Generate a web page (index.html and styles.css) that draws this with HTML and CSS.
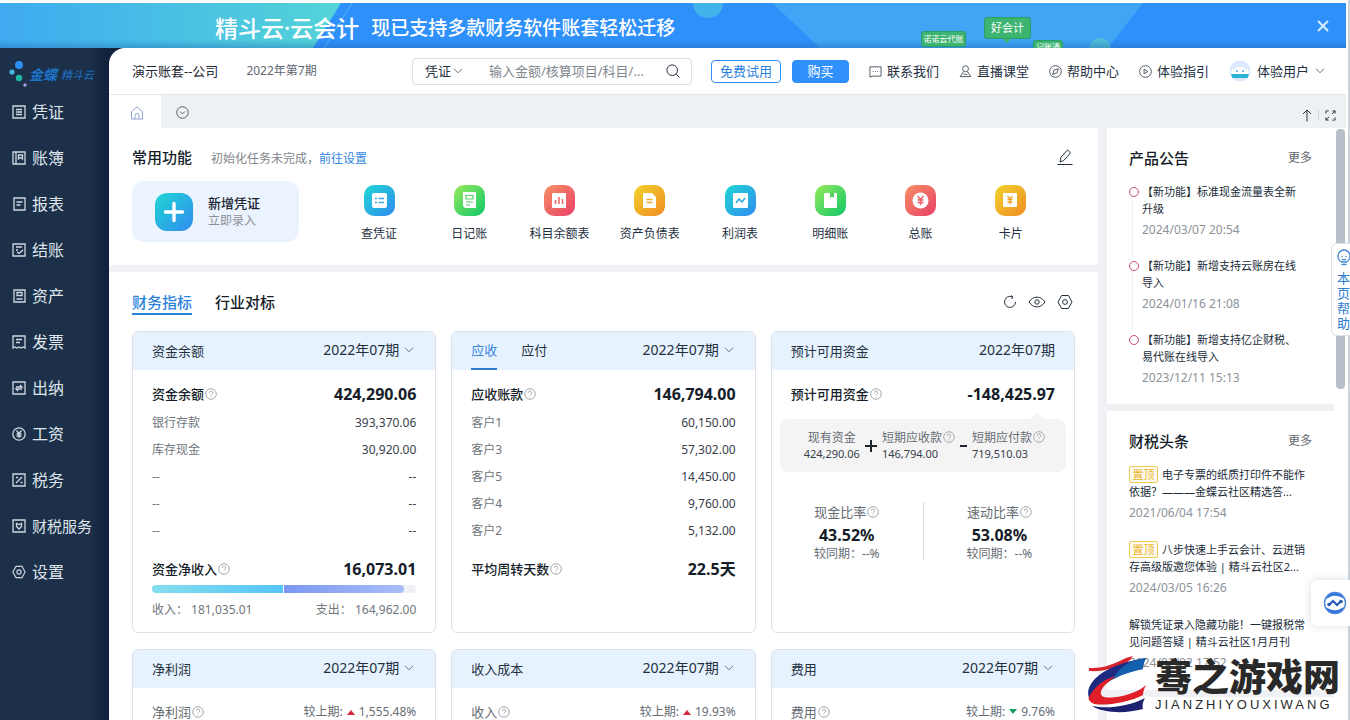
FILE: index.html
```html
<!DOCTYPE html>
<html lang="zh-CN">
<head>
<meta charset="utf-8">
<title>精斗云·云会计</title>
<link rel="stylesheet" href="styles.css">
</head>
<body>
<svg class="defs" aria-hidden="true">
  <defs>
    <linearGradient id="g-teal" x1="0" y1="0" x2="1" y2="1"><stop offset="0" stop-color="#1fd6d4"/><stop offset="1" stop-color="#318cf0"/></linearGradient>
    <linearGradient id="g-green" x1="0" y1="0" x2="1" y2="1"><stop offset="0" stop-color="#96ea5c"/><stop offset="1" stop-color="#0fc768"/></linearGradient>
    <linearGradient id="g-red" x1="0" y1="0" x2="1" y2="1"><stop offset="0" stop-color="#f88f62"/><stop offset="1" stop-color="#e8416a"/></linearGradient>
    <linearGradient id="g-gold" x1="0" y1="0" x2="1" y2="1"><stop offset="0" stop-color="#f2d22c"/><stop offset="1" stop-color="#f08c24"/></linearGradient>
    <linearGradient id="g-banner" x1="0" y1="0" x2="1" y2="0"><stop offset="0" stop-color="#3faaf0"/><stop offset="1" stop-color="#53d4d8"/></linearGradient>
    <linearGradient id="g-shade" x1="0" y1="0" x2="0" y2="1"><stop offset="0" stop-color="#1c5fa8" stop-opacity="0"/><stop offset="1" stop-color="#1c5fa8" stop-opacity=".35"/></linearGradient>
    <symbol id="help" viewBox="0 0 12 12"><circle cx="6" cy="6" r="5.3"/><path d="M4.3 4.8a1.7 1.7 0 1 1 2.5 1.4c-.6.3-.8.6-.8 1.1M6 8.6v.8"/></symbol>
    <symbol id="down" viewBox="0 0 10 6"><path d="M1 .8l4 4 4-4"/></symbol>
    <symbol id="gear" viewBox="0 0 16 16"><path d="M4.6 1.5h6.8L15 8l-3.6 6.5H4.6L1 8z"/><circle cx="8" cy="8" r="2.4"/></symbol>
  </defs>
</svg>

<div class="banner">
  <svg class="banner-art" viewBox="0 0 1346 45" preserveAspectRatio="xMidYMid slice" aria-hidden="true">
    <rect width="1346" height="45" fill="#2e90fa"/>
    <path d="M0 0h341l-28 45H0z" fill="url(#g-banner)"/>
    <path d="M352 0l-28 45" stroke="#58b4fa"/>
    <circle cx="708" cy="0" r="15" fill="#43b3ec"/>
    <path d="M772 0h371l-35 45H820z" fill="#3fa5f4"/>
    <circle cx="1100" cy="46" r="11" fill="#4fbcd8"/>
    <rect y="37" width="1346" height="8" fill="url(#g-shade)"/>
  </svg>
  <div class="banner-text"><strong>精斗云·云会计</strong><span>现已支持多款财务软件账套轻松迁移</span></div>
  <span class="bubble bubble-a">诺诺云代账</span>
  <span class="bubble bubble-b">好会计</span>
  <span class="bubble bubble-c">记账通</span>
  <button class="banner-close" aria-label="关闭"><svg width="12" height="12" viewBox="0 0 12 12" class="line"><path d="M1 1l10 10M11 1L1 11"/></svg></button>
</div>

<div class="shell">
  <nav class="side">
    <div class="logo">
      <svg width="18" height="28" viewBox="0 0 18 28" aria-hidden="true"><circle cx="10" cy="4" r="4" fill="#2d8cf0"/><circle cx="3" cy="11" r="2.6" fill="#41b8d8"/><circle cx="10" cy="17" r="3.2" fill="#1fb8a4"/><circle cx="16" cy="24" r="1.7" fill="#a69be0"/></svg>
      <b>金蝶</b><span>精斗云</span>
    </div>
    <a href="#"><svg viewBox="0 0 14 14"><path d="M1 1h12v12H1zM4 4.5h6M4 7h6M4 9.5h6"/></svg>凭证</a>
    <a href="#"><svg viewBox="0 0 14 14"><path d="M1 1h12v12H1zM4 1v12M6.5 4h4v4l-2-1.5-2 1.5z"/></svg>账簿</a>
    <a href="#"><svg viewBox="0 0 14 14"><path d="M2 1h11v12H2zM4.5 5h6M4.5 8h4"/></svg>报表</a>
    <a href="#"><svg viewBox="0 0 14 14"><path d="M1 1h12v12H1zM4 4h6M4 7h2M5 9l2 1.5L11 7"/></svg>结账</a>
    <a href="#"><svg viewBox="0 0 14 14"><path d="M2 1h11v12H2zM5 3.500h5v3H5zM4.500 10h6"/></svg>资产</a>
    <a href="#"><svg viewBox="0 0 14 14"><path d="M1 1h12v12l-2-1-2 1-2-1-2 1-2-1-2 1zM4 4.500h6M4 7.500h4"/></svg>发票</a>
    <a href="#"><svg viewBox="0 0 14 14"><path d="M1 1h12v12H1zM4 6h6L8 4M10 8H4l2 2"/></svg>出纳</a>
    <a href="#"><svg viewBox="0 0 14 14"><circle cx="7" cy="7" r="6.2"/><path d="M4.500 3.500L7 6.500l2.500-3M7 6.500V11M4.500 7h5M4.500 9h5"/></svg>工资</a>
    <a href="#"><svg viewBox="0 0 14 14"><path d="M1 1h12v12H1zM4 10l6-6M4 4.500h2M8.500 9.500h2"/></svg>税务</a>
    <a href="#" class="long"><svg viewBox="0 0 14 14"><path d="M1 1h12v12H1zM7 10L4.500 7.500V4.500L7 5.500l2.500-1v3z"/></svg>财税服务</a>
    <a href="#"><svg viewBox="0 0 16 16"><use href="#gear"/></svg>设置</a>
  </nav>

  <div class="main">
    <header class="top">
      <span class="company">演示账套--公司</span>
      <span class="period">2022年第7期</span>
      <form class="search">
        <select aria-label="类型"><option>凭证</option></select>
        <svg class="chev" width="10" height="6"><use href="#down"/></svg>
        <input type="text" aria-label="搜索" placeholder="输入金额/核算项目/科目/...">
        <button type="button" aria-label="搜索"><svg width="14" height="14" viewBox="0 0 14 14" class="line"><circle cx="6.200" cy="6.200" r="5.300"/><path d="M10 10l3.500 3.500"/></svg></button>
      </form>
      <button class="btn ghost">免费试用</button>
      <button class="btn solid">购买</button>
      <div class="links">
        <a href="#"><svg width="13" height="13" viewBox="0 0 14 14"><path d="M1 2h12v10H4l-3 1zM4 7h1M6.500 7h1M9 7h1"/></svg>联系我们</a>
        <a href="#"><svg width="13" height="13" viewBox="0 0 14 14"><circle cx="7" cy="4" r="3.200"/><path d="M5 7l-3.800 5.500h11.600L9 7M5 10h4"/></svg>直播课堂</a>
        <a href="#"><svg width="13" height="13" viewBox="0 0 14 14"><circle cx="7" cy="7" r="6.300"/><path d="M10 4L8.500 8.500 4 10l1.500-4.500z"/></svg>帮助中心</a>
        <a href="#"><svg width="13" height="13" viewBox="0 0 14 14"><circle cx="7" cy="7" r="6.300"/><path d="M5.500 4.500L9.500 7l-4 2.500z"/></svg>体验指引</a>
      </div>
      <a href="#" class="user">
        <svg width="22" height="22" viewBox="0 0 22 22"><circle cx="11" cy="11" r="10.500" fill="#dfe9fd"/><path d="M2 14c0-4 2-5 4-5 2-3 8-3 10 0 2 0 4 1 4 5z" fill="#fff"/><path d="M2 14h18l-1.500 4h-15z" fill="#2bb4d6"/><circle cx="8" cy="11" r="1" fill="#58a6f0"/><circle cx="14" cy="11" r="1" fill="#58a6f0"/></svg>体验用户<svg class="chev" width="10" height="6"><use href="#down"/></svg>
      </a>
    </header>

    <div class="tabs">
      <button class="tab home" aria-label="首页"><svg width="14" height="14" viewBox="0 0 14 14"><path d="M1.500 5.500L7 1l5.500 4.500V13h-11zM5 13V9.500a2 2 0 0 1 4 0V13"/></svg></button>
      <button class="tab" aria-label="更多标签"><svg width="13" height="13" viewBox="0 0 14 14"><circle cx="7" cy="7" r="6.200"/><path d="M4.500 6L7 8.500 9.500 6"/></svg></button>
      <div class="tab-tools">
        <button aria-label="收起"><svg width="10" height="13" viewBox="0 0 10 13" class="line"><path d="M5 12.500V1M1 5l4-4 4 4"/></svg></button>
        <button aria-label="全屏"><svg width="11" height="11" viewBox="0 0 12 12" class="line"><path d="M1 4V1h3M8 1h3v3M11 8v3H8M4 11H1V8M11 1L7.500 4.500M1 11l3.500-3.500"/></svg></button>
      </div>
    </div>

    <div class="content">
      <main class="left">
        <section class="common">
          <div class="head">
            <h2>常用功能</h2>
            <p>初始化任务未完成，<a href="#">前往设置</a></p>
            <button aria-label="编辑"><svg width="18" height="18" viewBox="0 0 18 18" class="line"><path d="M4 14l.8-4.500L11.500 2l3 2.800-6.700 7.700zM1.500 16.500h15"/></svg></button>
          </div>
          <div class="shortcuts">
            <a href="#" class="create">
              <svg width="38" height="38" viewBox="0 0 38 38"><rect width="38" height="38" rx="12" fill="url(#g-teal)"/><path d="M19 10.500v17M10.500 19h17" stroke="#fff" stroke-width="3.400" stroke-linecap="round"/></svg>
              <span><b>新增凭证</b><small>立即录入</small></span>
            </a>
            <div class="apps">
              <a href="#"><svg viewBox="0 0 31 31"><rect width="31" height="31" rx="10" fill="url(#g-teal)"/><rect x="8" y="8" width="15" height="15" rx="2" fill="#fff"/><path d="M11 13.500h2M14.500 13.500H20M11 17.500h2M14.500 17.500H20" stroke="#3ba8e8" stroke-width="1.400"/></svg>查凭证</a>
              <a href="#"><svg viewBox="0 0 31 31"><rect width="31" height="31" rx="10" fill="url(#g-green)"/><path d="M9 7h13v16H11l-2-2z" fill="#fff"/><path d="M12 10.500h7v3.500h-7zM12 17h7M12 20h4" stroke="#53cf66" stroke-width="1.200" fill="none"/></svg>日记账</a>
              <a href="#"><svg viewBox="0 0 31 31"><rect width="31" height="31" rx="10" fill="url(#g-red)"/><rect x="8" y="8" width="14" height="15" rx="1" fill="#fff"/><path d="M11.500 19v-4M15 19v-7M18.500 19v-5" stroke="#ef6264" stroke-width="1.500"/></svg>科目余额表</a>
              <a href="#"><svg viewBox="0 0 31 31"><rect width="31" height="31" rx="10" fill="url(#g-gold)"/><path d="M9 8h9l4 4v11H9z" fill="#fff"/><path d="M12.500 14.500h6M12.500 17.500h6" stroke="#f0ac2c" stroke-width="1.400"/></svg>资产负债表</a>
              <a href="#"><svg viewBox="0 0 31 31"><rect width="31" height="31" rx="10" fill="url(#g-teal)"/><rect x="8" y="8" width="15" height="15" rx="1" fill="#fff"/><path d="M11 18l3-4 3 3 3-4" stroke="#2eaadf" stroke-width="1.500" fill="none"/></svg>利润表</a>
              <a href="#"><svg viewBox="0 0 31 31"><rect width="31" height="31" rx="10" fill="url(#g-green)"/><rect x="9" y="8" width="13" height="15" rx="1" fill="#fff"/><path d="M15 8v5l2-1.500 2 1.500V8z" fill="#55cc60"/></svg>明细账</a>
              <a href="#"><svg viewBox="0 0 31 31"><rect width="31" height="31" rx="10" fill="url(#g-red)"/><circle cx="15.500" cy="15.500" r="8" fill="#fff"/><path d="M12.500 11l3 3.500 3-3.500M15.500 14.500V20M12.500 15h6M12.500 17.500h6" stroke="#ee5c66" stroke-width="1.400" fill="none"/></svg>总账</a>
              <a href="#"><svg viewBox="0 0 31 31"><rect width="31" height="31" rx="10" fill="url(#g-gold)"/><rect x="8" y="8" width="14" height="14" rx="1" fill="#fff"/><path d="M12.500 11l2.500 3 2.500-3M15 14v5.500M12.500 14.500h5M12.500 17h5" stroke="#f0a62a" stroke-width="1.300" fill="none"/></svg>卡片</a>
            </div>
          </div>
        </section>

        <section class="metrics">
          <div class="metric-tabs">
            <button class="on">财务指标</button><button>行业对标</button>
            <div class="tools">
              <button aria-label="刷新"><svg width="14" height="14" viewBox="0 0 14 14" class="line"><path d="M9 1.800A5.500 5.500 0 1 0 12.500 7M8 .5l2 1.500-1.500 2"/></svg></button>
              <button aria-label="显示"><svg width="18" height="12" viewBox="0 0 18 12" class="line"><path d="M1 6c4-6.500 12-6.500 16 0-4 6.500-12 6.500-16 0z"/><circle cx="9" cy="6" r="2.200"/></svg></button>
              <button aria-label="设置"><svg width="16" height="16" class="line"><use href="#gear"/></svg></button>
            </div>
          </div>

          <div class="cards">
            <article class="card">
              <header><h3>资金余额</h3><button class="month">2022年07期<svg class="chev" width="10" height="6"><use href="#down"/></svg></button></header>
              <div class="body">
                <div class="sum"><h4>资金余额<svg class="q"><use href="#help"/></svg></h4><b>424,290.06</b></div>
                <table>
                  <tr><th>银行存款</th><td>393,370.06</td></tr>
                  <tr><th>库存现金</th><td>30,920.00</td></tr>
                  <tr><th>--</th><td>--</td></tr>
                  <tr><th>--</th><td>--</td></tr>
                  <tr><th>--</th><td>--</td></tr>
                </table>
                <div class="sum"><h4>资金净收入<svg class="q"><use href="#help"/></svg></h4><b>16,073.01</b></div>
                <div class="bar"><i class="in" style="width:50%"></i><i class="out" style="width:45.5%"></i></div>
                <div class="legend"><span>收入： 181,035.01</span><span>支出： 164,962.00</span></div>
              </div>
            </article>

            <article class="card">
              <header><div class="switch"><button class="on">应收</button><button>应付</button></div><button class="month">2022年07期<svg class="chev" width="10" height="6"><use href="#down"/></svg></button></header>
              <div class="body">
                <div class="sum"><h4>应收账款<svg class="q"><use href="#help"/></svg></h4><b>146,794.00</b></div>
                <table>
                  <tr><th>客户1</th><td>60,150.00</td></tr>
                  <tr><th>客户3</th><td>57,302.00</td></tr>
                  <tr><th>客户5</th><td>14,450.00</td></tr>
                  <tr><th>客户4</th><td>9,760.00</td></tr>
                  <tr><th>客户2</th><td>5,132.00</td></tr>
                </table>
                <div class="sum"><h4>平均周转天数<svg class="q"><use href="#help"/></svg></h4><b>22.5天</b></div>
              </div>
            </article>

            <article class="card">
              <header><h3>预计可用资金</h3><span class="month">2022年07期</span></header>
              <div class="body">
                <div class="sum"><h4>预计可用资金<svg class="q"><use href="#help"/></svg></h4><b>-148,425.97</b></div>
                <div class="formula">
                  <div class="term first"><span>现有资金</span><em>424,290.06</em></div>
                  <svg width="12" height="12" viewBox="0 0 12 12"><path d="M6 0v12M0 6h12"/></svg>
                  <div class="term"><span>短期应收款<svg class="q"><use href="#help"/></svg></span><em>146,794.00</em></div>
                  <svg width="7" height="12" viewBox="0 0 7 12"><path d="M0 6h7"/></svg>
                  <div class="term"><span>短期应付款<svg class="q"><use href="#help"/></svg></span><em>719,510.03</em></div>
                </div>
                <div class="ratios">
                  <div><span>现金比率<svg class="q"><use href="#help"/></svg></span><b>43.52%</b><small>较同期：--%</small></div>
                  <div><span>速动比率<svg class="q"><use href="#help"/></svg></span><b>53.08%</b><small>较同期：--%</small></div>
                </div>
              </div>
            </article>

            <article class="card">
              <header><h3>净利润</h3><button class="month">2022年07期<svg class="chev" width="10" height="6"><use href="#down"/></svg></button></header>
              <div class="body"><div class="trend"><span>净利润<svg class="q"><use href="#help"/></svg></span><span>较上期:<svg width="8" height="6"><path d="M0 6l4-5 4 5z" fill="#d8293f"/></svg>1,555.48%</span></div></div>
            </article>
            <article class="card">
              <header><h3>收入成本</h3><button class="month">2022年07期<svg class="chev" width="10" height="6"><use href="#down"/></svg></button></header>
              <div class="body"><div class="trend"><span>收入<svg class="q"><use href="#help"/></svg></span><span>较上期:<svg width="8" height="6"><path d="M0 6l4-5 4 5z" fill="#d8293f"/></svg>19.93%</span></div></div>
            </article>
            <article class="card">
              <header><h3>费用</h3><button class="month">2022年07期<svg class="chev" width="10" height="6"><use href="#down"/></svg></button></header>
              <div class="body"><div class="trend"><span>费用<svg class="q"><use href="#help"/></svg></span><span>较上期:<svg width="8" height="6"><path d="M0 0h8L4 5z" fill="#1f9d62"/></svg>9.76%</span></div></div>
            </article>
          </div>
        </section>
      </main>

      <aside class="right">
        <section class="panel notices">
          <div class="panel-head"><h2>产品公告</h2><a href="#">更多</a></div>
          <ul>
            <li><a href="#">【新功能】标准现金流量表全新升级</a><time>2024/03/07 20:54</time></li>
            <li><a href="#">【新功能】新增支持云账房在线导入</a><time>2024/01/16 21:08</time></li>
            <li><a href="#">【新功能】新增支持亿企财税、易代账在线导入</a><time>2023/12/11 15:13</time></li>
          </ul>
        </section>
        <section class="panel news">
          <div class="panel-head"><h2>财税头条</h2><a href="#">更多</a></div>
          <ul>
            <li><a href="#"><span class="pin">置顶</span>电子专票的纸质打印件不能作<br>依据？———金蝶云社区精选答...</a><time>2021/06/04 17:54</time></li>
            <li><a href="#"><span class="pin">置顶</span>八步快速上手云会计、云进销<br>存高级版邀您体验 | 精斗云社区2...</a><time>2024/03/05 16:26</time></li>
            <li><a href="#">解锁凭证录入隐藏功能！一键报税常<br>见问题答疑 | 精斗云社区1月月刊</a><time>2024/02/02 17:52</time></li>
          </ul>
        </section>
        <section class="panel rest"></section>
      </aside>
      <div class="track"><div class="thumb"></div></div>
    </div>
  </div>
</div>

<button class="float-help">
  <svg width="14" height="18" viewBox="0 0 14 18" aria-hidden="true"><path d="M4.500 13C2 11.500 1 9.500 1 7a6 6 0 0 1 12 0c0 2.500-1 4.500-3.500 6zM4.500 15.500h5M5 7v1M9 7v1M5 10c1 1 3 1 4 0"/></svg>
  <span>本页帮助</span>
</button>
<button class="float-chat" aria-label="客服"><svg width="24" height="24" viewBox="0 0 24 24"><circle cx="12" cy="12" r="10.500" fill="#fff" stroke="#4a86dc" stroke-width="1.400"/><path d="M3 8c3-8 15-8 18 0-5-4-11-4-14-2zM21 16c-3 8-15 8-18 0 5 4 11 4 14 2z" fill="#3474d6"/><path d="M6 14l4-4 4 4 4-4" fill="none" stroke="#2557b8" stroke-width="2"/><circle cx="6" cy="13.500" r="1.800" fill="#2557b8"/><circle cx="18" cy="10.500" r="1.800" fill="#2557b8"/></svg></button>

<div class="watermark">
  <svg width="60" height="58" viewBox="0 0 60 58" aria-hidden="true">
    <path d="M2 13C16 14 29 8 39 3L46 1l-4 5C30 13 16 17 2 16z" fill="#d8232c"/>
    <path d="M59 3c-2 4-3 7-3 11C38 17 17 25 3 45-5 31 13 10 59 3z" fill="#1c2a80"/>
    <path d="M59 3c-2 4-3 7-3 11-10 2-20 5-30 10C32 12 43 5 59 3z" fill="#1260ae"/>
    <path d="M2 42C8 30 20 23 29 21 17 29 11 37 15 41c6 4 32 0 44-11-2 4-3 7-3 10C42 48 12 52 5 48c-3-2-4-4-3-6z" fill="#e01f28"/>
    <path d="M5 51c14 3 36 1 53-8-2 4-3 7-2 11C38 59 16 58 5 51z" fill="#1c2270"/>
  </svg>
  <div><strong>骞之游戏网</strong><span>JIANZHIYOUXIWANG</span></div>
</div>
</body>
</html>
```

FILE: styles.css
```css
* { box-sizing: border-box; }
html, body { height: 100%; }
body {
  margin: 0;
  padding: 3px 4px 0 0;
  display: flex;
  flex-direction: column;
  overflow: hidden;
  background: linear-gradient(to left, #ccd3da 2px, #fff 2px);
  font: 13px/18px "Noto Sans", "Noto Sans CJK SC", sans-serif;
  color: #24303f;
}
h2, h3, h4, p, ul { margin: 0; padding: 0; font-weight: 400; }
ul { list-style: none; }
a { color: inherit; text-decoration: none; }
button, input, select { font: inherit; color: inherit; background: none; border: 0; padding: 0; margin: 0; }
button { cursor: pointer; }
svg { display: block; flex: none; }
.defs { position: absolute; width: 0; height: 0; }
.line { fill: none; stroke: currentColor; }
.chev { fill: none; stroke: #6b7480; }
.q { display: inline-block; width: 12px; height: 12px; margin-left: 1px; fill: none; stroke: #a5a9af; vertical-align: -1px; }

/* Promotion banner */
.banner { position: relative; flex: none; height: 45px; overflow: hidden; color: #fff; }
.banner-art { position: absolute; inset: 0; width: 100%; height: 100%; }
.banner-text { position: relative; display: flex; align-items: center; gap: 12px; height: 100%; padding: 4px 0 0 215px; line-height: 32px; }
.banner-text strong { font-size: 23px; font-weight: 500; }
.banner-text span { font-size: 19px; font-weight: 500; }
.bubble { position: absolute; background: #3db471; border: 1px solid #279f66; border-radius: 3px; text-align: center; white-space: nowrap; }
.bubble-a { right: 380px; top: 28px; width: 45px; font-size: 8px; line-height: 14px; }
.bubble-b { right: 315px; top: 14px; width: 47px; font-size: 11px; line-height: 20px; }
.bubble-b::after { content: ""; position: absolute; left: 18px; top: 21px; border: 4px solid transparent; border-top-color: #3db471; border-bottom: 0; }
.bubble-c { right: 283px; top: 37px; width: 30px; font-size: 8px; line-height: 12px; }
.banner-close { position: absolute; right: 17px; top: 17px; color: #d8ecff; }
.banner-close svg { stroke-width: 2; }

/* Shell */
.shell { flex: 1; min-height: 0; display: flex; background: #14233d; }
.side { flex: none; width: 109px; background: linear-gradient(to right, #1c3049 88px, #10203c); color: #dfe5ec; }
.logo { display: flex; align-items: center; height: 41px; padding: 12px 0 0 9px; color: #1d74c8; font-size: 11px; font-style: italic; white-space: nowrap; }
.logo b { font-size: 14px; margin: 0 4px 0 2px; }
.side a { display: flex; align-items: center; gap: 6px; height: 46px; padding-left: 12px; font-size: 16px; line-height: 24px; }
.side a.long { font-size: 15px; }
.side a svg { width: 14px; height: 14px; fill: none; stroke: #cfd8e2; stroke-width: 1.300; }
.main { flex: 1; min-width: 0; display: flex; flex-direction: column; background: #fff; border-top-left-radius: 16px; overflow: hidden; }

/* Header */
.top { flex: none; display: flex; align-items: center; height: 47px; padding: 0 21px 0 23px; border-bottom: 1px solid #e4e7ea; white-space: nowrap; }
.company { color: #1d2733; }
.period { margin-left: 28px; font-size: 12px; color: #606770; }
.search { display: flex; align-items: center; flex: 1; max-width: 280px; height: 27px; margin: 0 19px 0 auto; padding: 0 11px 0 12px; border: 1px solid #dcdfe3; border-radius: 4px; }
.search select { appearance: none; width: 28px; }
.search input { flex: 1; min-width: 0; margin: 0 8px 0 26px; outline: 0; }
.search input::placeholder { color: #80868e; opacity: 1; }
.btn { height: 23px; border-radius: 4px; border: 1px solid #2f8df5; }
.ghost { width: 70px; color: #2b82dd; }
.solid { width: 57px; margin-left: 11px; background: #2f8ffb; color: #fff; }
.links { display: flex; gap: 20px; margin-left: 20px; }
.links a { display: flex; align-items: center; gap: 5px; }
.links svg { fill: none; stroke: #4a535e; }
.user { display: flex; align-items: center; gap: 6px; margin-left: 20px; }

/* Tab strip */
.tabs { flex: none; display: flex; height: 33px; background: #eef1f3; }
.tab { width: 42px; padding: 2px 0 0; display: flex; align-items: center; justify-content: center; }
.tab svg { fill: none; stroke: #4b535d; }
.home { width: 52px; background: #fff; padding: 2px 0 0 3px; }
.home svg { stroke: #8ea2d4; }
.tab-tools { display: flex; align-items: center; margin-left: auto; padding: 7px 10px 0 0; }
.tab-tools button + button { margin-left: 6px; padding-left: 6px; border-left: 1px solid #cfd4d9; }

/* Content columns */
.content { flex: 1; min-height: 0; display: grid; grid-template-columns: minmax(0, 1fr) 227px 12px; background: #f0f1f4; overflow: hidden; }
.left { margin-right: 9px; min-width: 0; }
.common { background: #fff; height: 137px; padding: 17px 23px 0; margin-bottom: 7px; }
.head { display: flex; align-items: center; height: 24px; }
.head h2, .panel-head h2 { font-size: 15px; line-height: 24px; font-weight: 500; color: #141d28; }
.head p { margin-left: 19px; padding-top: 4px; font-size: 12px; color: #81868c; }
.head p a { color: #2f86e0; }
.head button { margin-left: auto; padding-right: 1px; }
.shortcuts { display: flex; padding-top: 12px; }
.create { flex: none; display: flex; align-items: center; gap: 15px; width: 167px; height: 61px; padding-left: 23px; border-radius: 12px; background: #ebf4fe; }
.create b, .create small { display: block; }
.create b { font-weight: 500; color: #18222e; }
.create small { font-size: 12px; color: #8b9097; }
.apps { flex: 1; display: grid; grid-template-columns: repeat(8, minmax(0, 1fr)); margin: 0 19px 0 35px; padding-top: 4px; }
.apps a { display: flex; flex-direction: column; align-items: center; gap: 9px; font-size: 12px; white-space: nowrap; }
.apps svg { width: 31px; height: 31px; }

/* Metrics */
.metrics { background: #fff; padding: 18px 23px 0; }
.metric-tabs { display: flex; align-items: center; gap: 23px; height: 25px; margin-bottom: 16px; }
.metric-tabs > button { height: 25px; font-size: 15px; font-weight: 500; color: #141d28; border-bottom: 2px solid transparent; }
.metric-tabs > .on { color: #2d83da; border-color: #2d83da; }
.tools { display: flex; align-items: center; gap: 11px; margin-left: auto; padding: 0 2px 2px 0; }
.cards { display: grid; grid-template-columns: repeat(3, minmax(0, 1fr)); gap: 16px 15px; }
.card { border: 1px solid #dce2e8; border-radius: 6px; overflow: hidden; }
.card > header { display: flex; align-items: center; justify-content: space-between; height: 38px; padding: 0 19px; background: #e6f2fe; }
.card h3 { font-size: 13px; }
.month { display: flex; align-items: center; gap: 5px; padding-bottom: 2px; font-size: 14px; }
button.month { padding-right: 2px; }
.switch { display: flex; gap: 24px; height: 38px; }
.switch button { border-bottom: 2px solid transparent; }
.switch .on { color: #3a86dc; border-color: #2d7cd0; }
.body { padding: 8px 19px 13px; }
.sum { display: flex; align-items: center; justify-content: space-between; height: 31px; color: #141d28; }
.sum h4 { font-size: 13px; font-weight: 500; }
.sum b { font-size: 16px; }
table { width: 100%; border-collapse: collapse; margin-bottom: 9px; font-size: 12px; }
th, td { height: 27px; padding: 0; }
th { text-align: left; font-weight: 400; color: #70757b; }
td { text-align: right; color: #39414b; }
.bar { display: flex; height: 8px; margin-top: 1px; border-radius: 4px; background: #f1f0f4; overflow: hidden; }
.in { background: linear-gradient(to right, #86def0, #55c4f6); border-right: 1px solid #fff; }
.out { background: linear-gradient(to right, #7a97f2, #a9bef8); border-radius: 0 4px 4px 0; }
.legend { display: flex; justify-content: space-between; padding-top: 8px; font-size: 12px; color: #70757b; }
.formula { position: relative; display: flex; align-items: center; gap: 5px; height: 53px; margin: 10px -11px 0; padding-left: 24px; border-radius: 8px; background: #f4f4f5; }
.formula::before { content: ""; position: absolute; right: 22px; top: -6px; border: 7px solid transparent; border-bottom-color: #f4f4f5; border-top: 0; }
.formula > svg { stroke: #1c2530; stroke-width: 2; }
.term { font-size: 12px; line-height: 16px; white-space: nowrap; color: #666c73; }
.term span, .term em { display: block; }
.term em { font-size: 11px; font-style: normal; color: #39414b; }
.first { text-align: center; }
.ratios { display: grid; grid-template-columns: 1fr 1fr; height: 55px; margin-top: 30px; text-align: center; }
.ratios div { display: flex; flex-direction: column; margin-left: -20px; color: #666c73; }
.ratios div + div { border-left: 1px solid #d9dbde; margin: 0 -20px 0 0; }
.ratios b { font-size: 16px; line-height: 26px; color: #141d28; }
.ratios span { line-height: 20px; }
.ratios small { font-size: 12px; line-height: 12px; }
.trend { display: flex; justify-content: space-between; line-height: 32px; color: #666c73; font-size: 12px; }
.trend span:last-child { display: flex; align-items: center; gap: 4px; }
.trend span:first-child { font-size: 13px; }

/* Right column */
.right { min-width: 0; }
.panel { background: #fff; padding: 18px 22px 0; margin-bottom: 7px; }
.panel-head { display: flex; align-items: center; justify-content: space-between; margin-bottom: 13px; }
.panel-head a { font-size: 12px; color: #62676e; }
.panel li a { display: block; font-size: 11px; line-height: 17px; color: #202b38; }
.panel time { display: block; margin-top: 4px; font-size: 12px; line-height: 17px; color: #8d9298; }
.notices { height: 276px; }
.notices li { position: relative; height: 74px; padding: 0 8px 0 13px; }
.notices li::before { content: ""; position: absolute; left: 0; top: 4px; width: 8px; height: 8px; border: 1px solid #c8506a; border-radius: 50%; }
.notices li:not(:last-child)::after { content: ""; position: absolute; left: 3px; top: 14px; bottom: 0; border-left: 1px solid #eceef0; }
.news { height: 279px; }
.news li { height: 75px; white-space: nowrap; }
.pin { display: inline-block; width: 29px; margin-right: 4px; border: 1px solid #efcb52; border-radius: 2px; background: #fffaf0; color: #e8b51d; text-align: center; line-height: 15px; }
.rest { height: 60px; }
.track { padding: 1px 1px 0 2px; background: #fff; }
.thumb { height: 260px; border-radius: 4px; background: #b7bfc9; }

/* Floating widgets */
.float-help { position: absolute; right: 0; top: 243px; width: 19px; padding: 5px 0 4px 5px; display: flex; flex-direction: column; gap: 4px; overflow: hidden; background: #fff; border: 1px solid #dbe2ea; border-right: 0; border-radius: 6px 0 0 6px; color: #2b7cd0; }
.float-help svg { fill: none; stroke: #4488d4; stroke-width: 1.300; }
.float-help span { width: 13px; line-height: 15px; overflow-wrap: anywhere; }
.float-chat { position: absolute; right: 0; top: 580px; width: 39px; height: 46px; padding-left: 12px; background: #fff; border-radius: 6px 0 0 6px; box-shadow: 0 0 8px rgba(60, 80, 120, .2); }
.watermark { position: absolute; right: 10px; bottom: 7px; display: flex; align-items: center; gap: 8px; color: #292929; }
.watermark strong { display: block; font-size: 37px; font-weight: 900; line-height: 42px; white-space: nowrap; }
.watermark span { display: block; font: 13px/14px "Liberation Sans", Arial, sans-serif; letter-spacing: 3px; }
```
